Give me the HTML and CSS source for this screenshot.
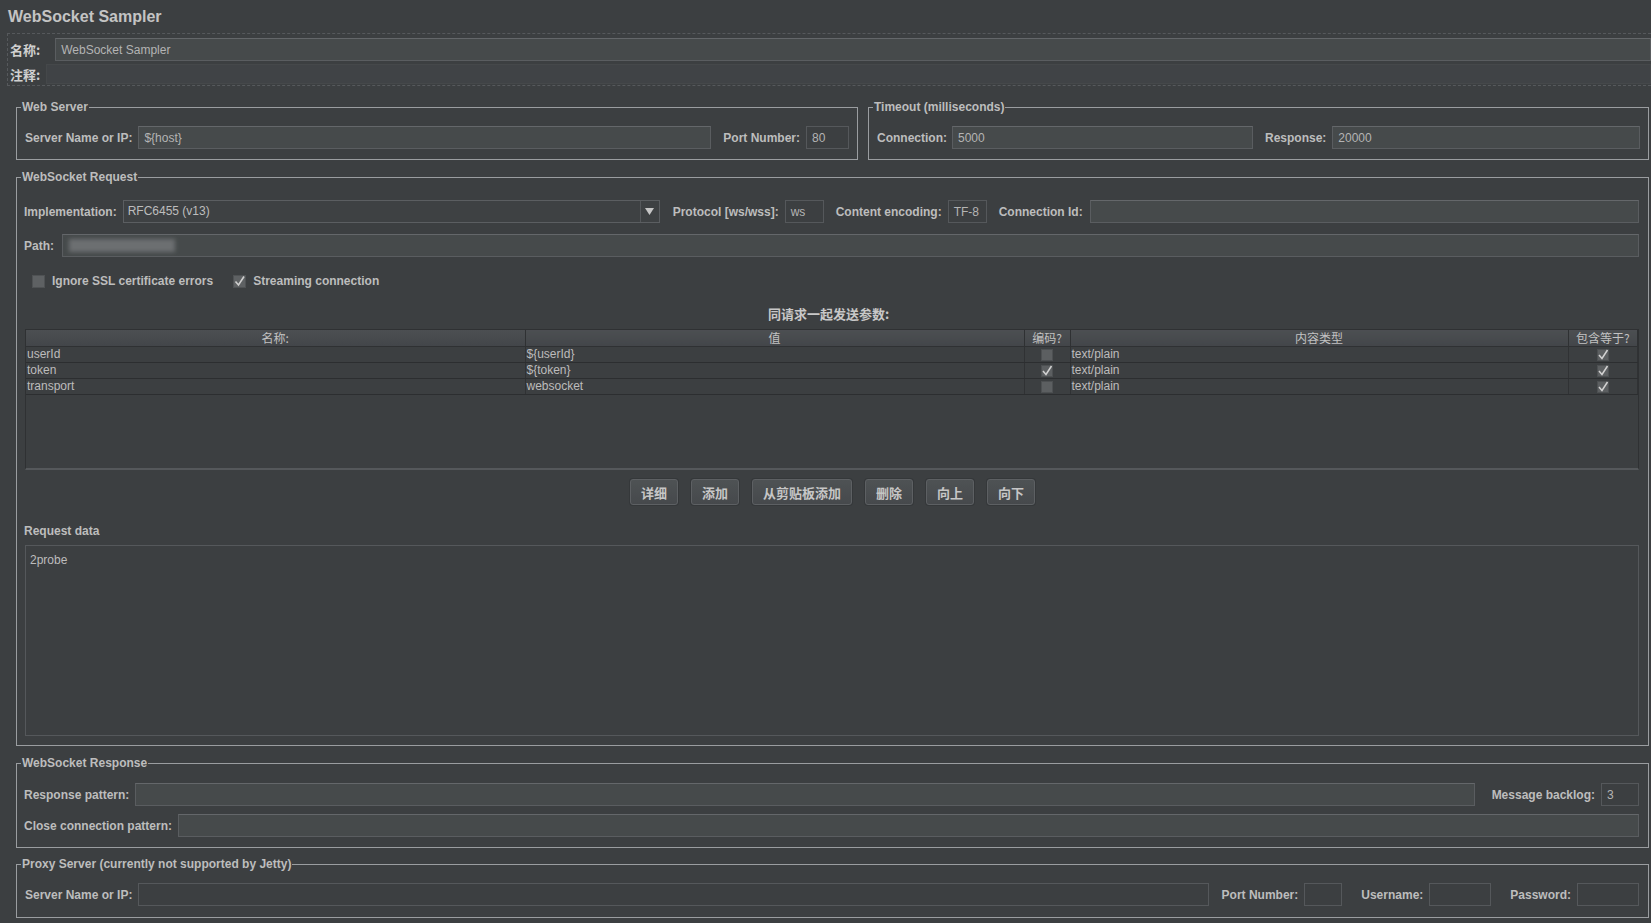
FILE: index.html
```html
<!DOCTYPE html>
<html lang="zh">
<head>
<meta charset="utf-8">
<title>WebSocket Sampler</title>
<link rel="stylesheet" href="styles.css">
</head>
<body>
<div class="page">
  <div class="title">WebSocket Sampler</div>

  <div class="namebox">
    <div class="nrow">
      <span class="nlabel lbl-name">名称:</span>
      <div class="field light grow">WebSocket Sampler</div>
    </div>
    <div class="nrow comment">
      <span class="nlabel lbl-comment">注释:</span>
      <div class="field cmt grow"></div>
    </div>
  </div>

  <div class="sections">
    <div class="pair">
      <fieldset class="fs fs-web">
        <legend>Web Server</legend>
        <div class="fs-body pad-a">
          <div class="row">
            <span class="lbl">Server Name or IP:</span>
            <div class="field light grow">${host}</div>
            <span class="lbl gap-l">Port Number:</span>
            <div class="field dark w43">80</div>
          </div>
        </div>
      </fieldset>
      <fieldset class="fs fs-timeout">
        <legend>Timeout (milliseconds)</legend>
        <div class="fs-body pad-a">
          <div class="row">
            <span class="lbl">Connection:</span>
            <div class="field light grow">5000</div>
            <span class="lbl gap-l">Response:</span>
            <div class="field light grow">20000</div>
          </div>
        </div>
      </fieldset>
    </div>

    <fieldset class="fs fs-req">
      <legend>WebSocket Request</legend>
      <div class="fs-body pad-req">
        <div class="row">
          <span class="lbl">Implementation:</span>
          <div class="combo">
            <span class="combo-text">RFC6455 (v13)</span>
            <span class="combo-arrow"><svg width="9" height="7" viewBox="0 0 9 7"><path d="M0 0 H9 L4.5 7 Z" fill="#c6c6c6"/></svg></span>
          </div>
          <span class="lbl gap-l">Protocol [ws/wss]:</span>
          <div class="field dark w39">ws</div>
          <span class="lbl gap-l">Content encoding:</span>
          <div class="field dark w39">TF-8</div>
          <span class="lbl gap-l cid-l">Connection Id:</span>
          <div class="field light grow"></div>
        </div>
        <div class="row path-row">
          <span class="lbl">Path:</span>
          <div class="field light grow path"><span class="blur"></span></div>
        </div>
        <div class="checks">
          <span class="cb"></span><span class="lbl cb-l">Ignore SSL certificate errors</span>
          <span class="cb checked second"><svg width="13" height="13" viewBox="0 0 13 13"><path d="M2.5 6.5 L5.5 10 L11 1.5" fill="none" stroke="#cfcfcf" stroke-width="1.6"/></svg></span><span class="lbl cb-l">Streaming connection</span>
        </div>
        <div class="caption">同请求一起发送参数:</div>
        <div class="tablewrap">
          <table class="params">
            <colgroup>
              <col class="c-name"><col class="c-val"><col class="c-enc"><col class="c-type"><col class="c-eq">
            </colgroup>
            <thead>
              <tr><th>名称:</th><th>值</th><th>编码?</th><th>内容类型</th><th>包含等于?</th></tr>
            </thead>
            <tbody>
              <tr><td>userId</td><td>${userId}</td><td class="cc"><span class="tcb"></span></td><td>text/plain</td><td class="cc"><span class="tcb"><svg width="12" height="12" viewBox="0 0 12 12"><path d="M2 6 L5 9.5 L10.5 1" fill="none" stroke="#d2d2d2" stroke-width="1.5"/></svg></span></td></tr>
              <tr><td>token</td><td>${token}</td><td class="cc"><span class="tcb"><svg width="12" height="12" viewBox="0 0 12 12"><path d="M2 6 L5 9.5 L10.5 1" fill="none" stroke="#d2d2d2" stroke-width="1.5"/></svg></span></td><td>text/plain</td><td class="cc"><span class="tcb"><svg width="12" height="12" viewBox="0 0 12 12"><path d="M2 6 L5 9.5 L10.5 1" fill="none" stroke="#d2d2d2" stroke-width="1.5"/></svg></span></td></tr>
              <tr><td>transport</td><td>websocket</td><td class="cc"><span class="tcb"></span></td><td>text/plain</td><td class="cc"><span class="tcb"><svg width="12" height="12" viewBox="0 0 12 12"><path d="M2 6 L5 9.5 L10.5 1" fill="none" stroke="#d2d2d2" stroke-width="1.5"/></svg></span></td></tr>
            </tbody>
          </table>
        </div>
        <div class="buttons">
          <button class="btn">详细</button>
          <button class="btn">添加</button>
          <button class="btn">从剪贴板添加</button>
          <button class="btn">删除</button>
          <button class="btn">向上</button>
          <button class="btn">向下</button>
        </div>
        <div class="lbl reqdata">Request data</div>
        <div class="textarea">2probe</div>
      </div>
    </fieldset>

    <fieldset class="fs fs-resp">
      <legend>WebSocket Response</legend>
      <div class="fs-body pad-resp">
        <div class="row">
          <span class="lbl">Response pattern:</span>
          <div class="field light grow"></div>
          <span class="lbl gap-xl">Message backlog:</span>
          <div class="field dark w38">3</div>
        </div>
        <div class="row close-row">
          <span class="lbl">Close connection pattern:</span>
          <div class="field light grow"></div>
        </div>
      </div>
    </fieldset>

    <fieldset class="fs fs-proxy">
      <legend>Proxy Server (currently not supported by Jetty)</legend>
      <div class="fs-body pad-proxy">
        <div class="row">
          <span class="lbl">Server Name or IP:</span>
          <div class="field dark grow"></div>
          <span class="lbl gap-l">Port Number:</span>
          <div class="field dark w38"></div>
          <span class="lbl gap-xl">Username:</span>
          <div class="field dark w62"></div>
          <span class="lbl gap-xl">Password:</span>
          <div class="field dark w62"></div>
        </div>
      </div>
    </fieldset>
  </div>
</div>
</body>
</html>
```
FILE: styles.css
```css
* { box-sizing: border-box; }

html, body {
  margin: 0;
  padding: 0;
  background: #3c3f41;
}

body {
  width: 1651px;
  height: 923px;
  overflow: hidden;
  font-family: "Liberation Sans", "Noto Sans CJK SC", sans-serif;
  font-size: 12px;
  color: #bbbbbb;
}

.title {
  height: 33px;
  line-height: 34px;
  padding-left: 8px;
  font-size: 16px;
  font-weight: bold;
  color: #c4c4c4;
}

/* name / comment block */
.namebox {
  margin-left: 7px;
  border: 1px dashed #56595c;
  border-right: none;
  padding: 4px 0 1px 2px;
}

.nrow {
  display: flex;
  align-items: center;
  height: 23px;
}

.nrow.comment {
  height: 20px;
  margin-top: 3px;
}

.nlabel {
  font-family: "Noto Sans CJK SC", sans-serif;
  font-size: 13px;
  font-weight: bold;
  color: #d0d0d0;
}

.lbl-name { margin-right: 15px; }
.lbl-comment { margin-right: 6px; }

/* generic */
.row {
  display: flex;
  align-items: center;
  height: 23px;
}

.lbl {
  font-weight: bold;
  white-space: nowrap;
  margin-right: 6px;
  color: #bdbdbd;
}

.gap-l { margin-left: 12px; }
.gap-xl { margin-left: 17px; }

.grow { flex: 1 1 auto; min-width: 0; }

.field {
  height: 23px;
  line-height: 23px;
  padding: 0 5px;
  border: 1px solid #5a5d60;
  border-top-color: #64676a;
  color: #b4b4b4;
  white-space: nowrap;
  overflow: hidden;
}

.field.light { background: #464a4b; }
.field.dark { background: #3c3f41; border-color: #55585b; }
.field.cmt { height: 20px; background: #404346; border-color: #45484a; }

.w43 { width: 43px; flex: none; }
.w39 { width: 39px; flex: none; }
.w38 { width: 38px; flex: none; }
.w62 { width: 62px; flex: none; }

/* fieldsets */
.sections {
  margin: 14px 2px 0 16px;
}

.fs {
  margin: 0;
  padding: 0;
  border: 1px solid #9a9da0;
  min-width: 0;
}

.fs legend {
  font-weight: bold;
  font-size: 12px;
  line-height: 14px;
  padding: 0 1px;
  margin-left: 4px;
  color: #bdbdbd;
}

.pair {
  display: flex;
}

.fs-web { flex: 0 0 842px; margin-right: 10px; }
.fs-timeout { flex: 1 1 auto; }

.pad-a { padding: 12px 8px 10px 8px; }
.fs-timeout .pad-a .lbl:first-child { margin-right: 5px; }

.fs-req { margin-top: 10px; }
.pad-req { padding: 16px 9px 9px 7px; }

.combo {
  width: 537px;
  height: 23px;
  flex: none;
  display: flex;
  border: 1px solid #5b5e61;
  background: #3e4143;
}

.combo-text {
  flex: 1;
  line-height: 21px;
  padding-left: 4px;
  color: #bdbdbd;
}

.combo-arrow {
  width: 19px;
  border-left: 1px solid #55585b;
  display: flex;
  align-items: center;
  justify-content: center;
}

.combo + .gap-l { margin-left: 13px; }
.cid-l { margin-right: 7px; }

.path-row { margin-top: 11px; }
.path-row .lbl { margin-right: 8px; }

.path { position: relative; }
.blur {
  position: absolute;
  left: 6px;
  top: 4px;
  width: 106px;
  height: 13px;
  background: #6c6f71;
  filter: blur(2px);
}

.checks {
  display: flex;
  align-items: center;
  height: 16px;
  margin-top: 16px;
  padding-left: 8px;
}

.cb {
  width: 13px;
  height: 13px;
  background: #5e6163;
  border: 1px solid #4f5254;
  margin-right: 7px;
  flex: none;
  display: flex;
}

.cb.second { margin-left: 20px; }
.cb svg { margin: -1px; }
.cb-l { margin-right: 0; }

.caption {
  margin-top: 18px;
  text-align: center;
  font-family: "Noto Sans CJK SC", sans-serif;
  font-size: 13px;
  line-height: 14px;
  font-weight: bold;
  color: #c8c8c8;
  padding-right: 6px;
}

/* table */
.tablewrap {
  margin: 8px 0 0 1px;
  height: 141px;
  border: 1px solid #2f3133;
  border-bottom: 2px solid #55585b;
  background: #3c3f41;
}

.params {
  width: 100%;
  table-layout: fixed;
  border-collapse: collapse;
}

.c-name { width: 499px; }
.c-val { width: 499px; }
.c-enc { width: 46px; }
.c-type { width: 498px; }
.c-eq { width: auto; }

.params th {
  height: 16px;
  padding: 0;
  font-family: "Noto Sans CJK SC", sans-serif;
  font-weight: normal;
  font-size: 12px;
  line-height: 14px;
  color: #c2c2c2;
  background: linear-gradient(#4c4f52, #43464a);
  border-right: 1px solid #2f3133;
  border-bottom: 1px solid #2f3133;
  text-align: center;
}

.params td {
  height: 16px;
  padding: 0 1px;
  font-size: 12px;
  line-height: 14px;
  color: #bcbcbc;
  border-right: 1px solid #303234;
  border-bottom: 1px solid #2c2e30;
  white-space: nowrap;
  overflow: hidden;
}

.params td.cc { text-align: center; padding: 0; }

.tcb {
  display: inline-block;
  vertical-align: middle;
  width: 12px;
  height: 12px;
  background: #5c5f61;
  border: 1px solid #4d5052;
  position: relative;
}

.tcb svg { position: absolute; left: -1px; top: -1px; }

/* buttons */
.buttons {
  display: flex;
  justify-content: center;
  gap: 13px;
  margin-top: 9px;
  height: 26px;
  padding-left: 2px;
}

.btn {
  height: 26px;
  padding: 0 10px;
  font-family: "Noto Sans CJK SC", sans-serif;
  font-size: 13px;
  font-weight: bold;
  color: #c6c6c6;
  background: linear-gradient(#4e5254, #46494c);
  border: 1px solid #5d6063;
  border-radius: 3px;
  box-shadow: 0 0 0 1px #35383a;
}

.reqdata {
  margin-top: 19px;
  line-height: 14px;
}

.textarea {
  margin: 7px 0 0 1px;
  height: 191px;
  border: 1px solid #55585b;
  background: #3c3f41;
  padding: 7px 4px;
  line-height: 14px;
  color: #bcbcbc;
}

/* response */
.fs-resp { margin-top: 10px; }
.pad-resp { padding: 13px 9px 10px 7px; }
.close-row { margin-top: 8px; }

/* proxy */
.fs-proxy { margin-top: 9px; }
.pad-proxy { padding: 12px 9px 11px 8px; }
.pad-proxy .gap-l { margin-left: 13px; }
.pad-proxy .gap-xl { margin-left: 19px; }
```
